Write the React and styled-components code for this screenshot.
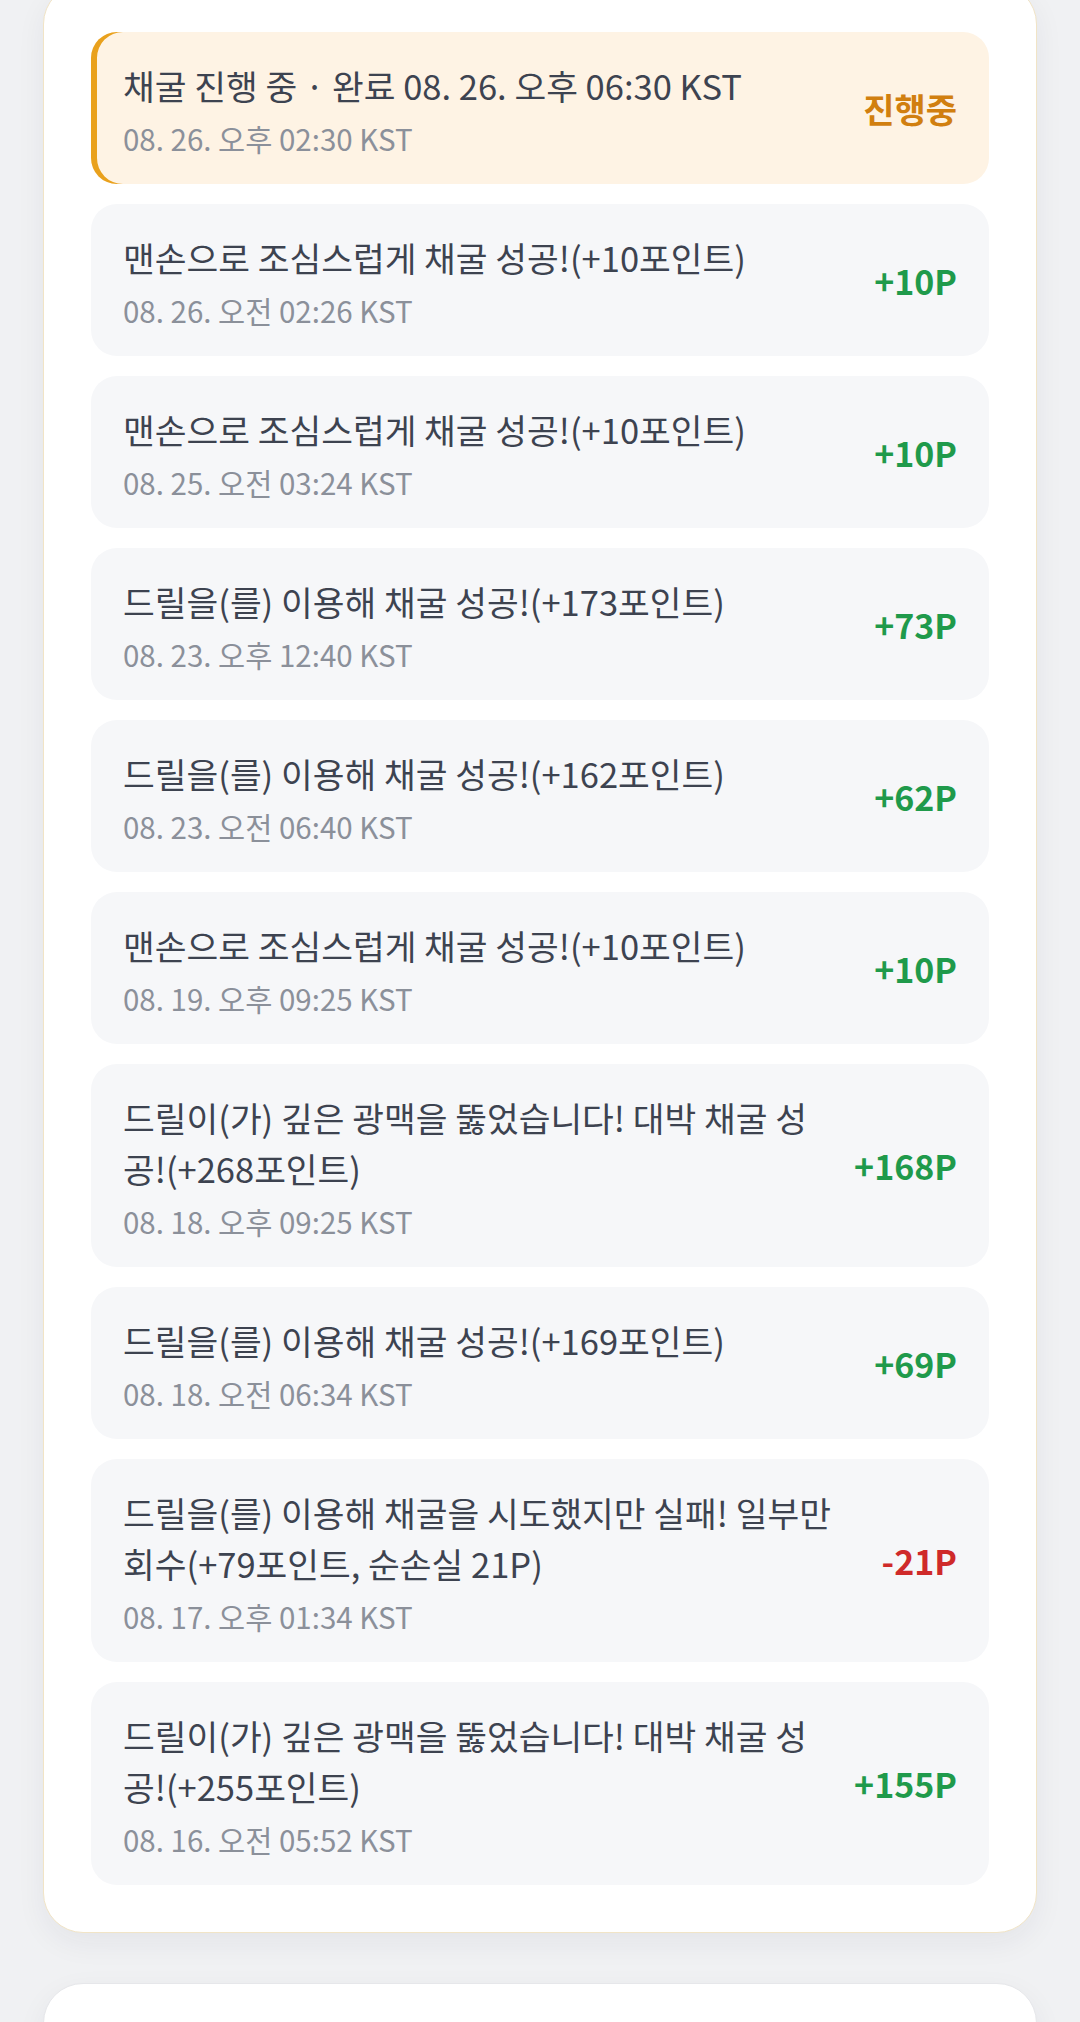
import React from 'react'
import styled, { createGlobalStyle } from 'styled-components'

const GlobalStyle = createGlobalStyle`
  html, body {
    margin: 0;
    padding: 0;
    background: #f0f1f3;
  }
  body {
    font-family: "Noto Sans CJK KR", "Noto Sans", sans-serif;
    color: #3f4451;
  }
`

const Page = styled.div`
  padding: 0 43px;
  display: flex;
  flex-direction: column;
  gap: 50px;
  margin-top: -16px;
`

const Card = styled.div`
  background: #ffffff;
  border: 1px solid ${p => (p.$warm ? '#f1e4c6' : '#e6e7ea')};
  border-radius: 40px;
  box-shadow: 0 10px 30px rgba(30, 40, 60, 0.06);
  padding: ${p => (p.$empty ? '0' : '47px')};
  height: ${p => (p.$empty ? '200px' : 'auto')};
`

const List = styled.div`
  display: flex;
  flex-direction: column;
  gap: 20px;
`

const Item = styled.div`
  display: flex;
  align-items: center;
  gap: 20px;
  padding: 28px 32px;
  border-radius: 26px;
  background: ${p => (p.$active ? '#fef3e4' : '#f6f7f9')};
  box-shadow: ${p => (p.$active ? 'inset 6px 0 0 #e9a11d' : 'none')};
`

const Body = styled.div`
  flex: 1;
  min-width: 0;
  display: flex;
  flex-direction: column;
  gap: 10px;
`

const Title = styled.div`
  font-size: 34.5px;
  line-height: 51px;
  color: #3d4350;
`

const Time = styled.div`
  font-size: 29.5px;
  line-height: 35px;
  color: #8b909a;
`

const Amount = styled.div`
  flex-shrink: 0;
  font-size: 34px;
  font-weight: 700;
  color: ${p => p.$color};
`

const colors = {
  pending: '#d17f0f',
  plus: '#1f9a4b',
  minus: '#cf2a2a',
}

const logs = [
  { title: '맨손으로 조심스럽게 채굴 성공!(+10포인트)', time: '08. 26. 오전 02:26 KST', amount: '+10P', kind: 'plus' },
  { title: '맨손으로 조심스럽게 채굴 성공!(+10포인트)', time: '08. 25. 오전 03:24 KST', amount: '+10P', kind: 'plus' },
  { title: '드릴을(를) 이용해 채굴 성공!(+173포인트)', time: '08. 23. 오후 12:40 KST', amount: '+73P', kind: 'plus' },
  { title: '드릴을(를) 이용해 채굴 성공!(+162포인트)', time: '08. 23. 오전 06:40 KST', amount: '+62P', kind: 'plus' },
  { title: '맨손으로 조심스럽게 채굴 성공!(+10포인트)', time: '08. 19. 오후 09:25 KST', amount: '+10P', kind: 'plus' },
  { title: '드릴이(가) 깊은 광맥을 뚫었습니다! 대박 채굴 성공!(+268포인트)', time: '08. 18. 오후 09:25 KST', amount: '+168P', kind: 'plus' },
  { title: '드릴을(를) 이용해 채굴 성공!(+169포인트)', time: '08. 18. 오전 06:34 KST', amount: '+69P', kind: 'plus' },
  { title: '드릴을(를) 이용해 채굴을 시도했지만 실패! 일부만 회수(+79포인트, 순손실 21P)', time: '08. 17. 오후 01:34 KST', amount: '-21P', kind: 'minus' },
  { title: '드릴이(가) 깊은 광맥을 뚫었습니다! 대박 채굴 성공!(+255포인트)', time: '08. 16. 오전 05:52 KST', amount: '+155P', kind: 'plus' },
]

const LogItem = ({ title, time, amount, kind, active }) => (
  <Item $active={active}>
    <Body>
      <Title>{title}</Title>
      <Time>{time}</Time>
    </Body>
    <Amount $color={colors[kind]}>{amount}</Amount>
  </Item>
)

export default function App() {
  return (
    <>
      <GlobalStyle />
      <Page>
        <Card $warm>
          <List>
            <LogItem
              active
              title="채굴 진행 중 · 완료 08. 26. 오후 06:30 KST"
              time="08. 26. 오후 02:30 KST"
              amount="진행중"
              kind="pending"
            />
            {logs.map((log, i) => (
              <LogItem key={i} {...log} />
            ))}
          </List>
        </Card>
        <Card $empty />
      </Page>
    </>
  )
}
